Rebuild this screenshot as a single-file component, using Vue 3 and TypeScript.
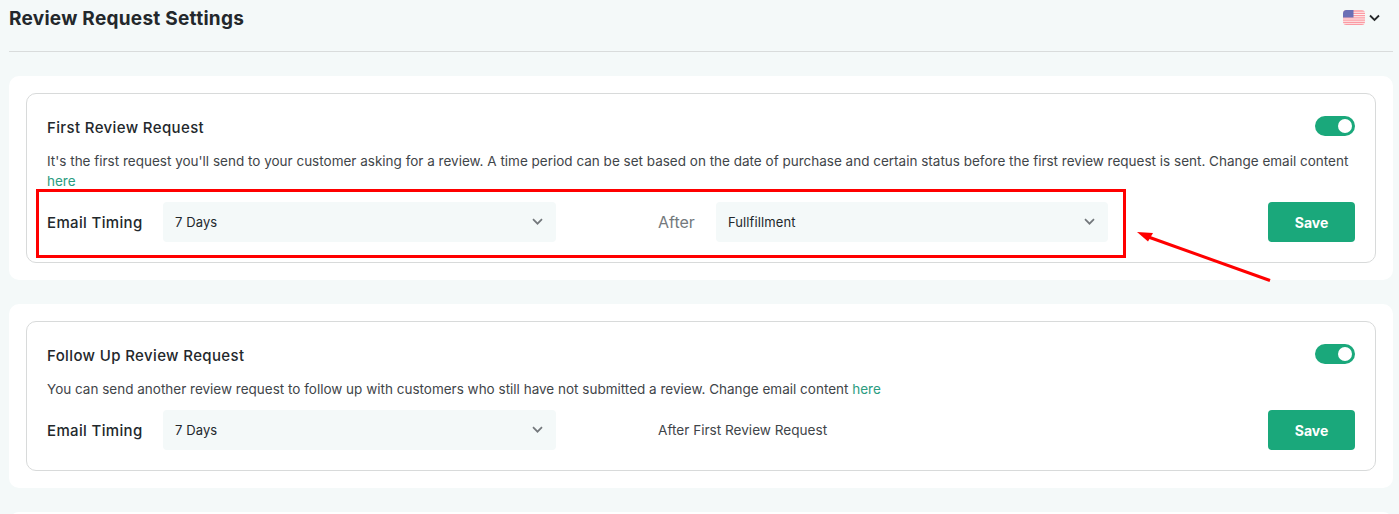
<script setup lang="ts">
interface Req { title: string; before: string; wrap: boolean; after: string; select: boolean }
const reqs: Req[] = [
  { title: 'First Review Request', before: "It's the first request you'll send to your customer asking for a review. A time period can be set based on the date of purchase and certain status before the first review request is sent. Change email content", wrap: true, after: 'After', select: true },
  { title: 'Follow Up Review Request', before: 'You can send another review request to follow up with customers who still have not submitted a review. Change email content', wrap: false, after: 'After First Review Request', select: false },
]
</script>

<template>
  <div class="page">
    <header class="top">
      <h1>Review Request Settings</h1>
      <div class="lang">
        <svg class="flag" width="22" height="15" viewBox="0 0 22 15">
          <defs><clipPath id="fc"><rect width="22" height="15" rx="3.5" /></clipPath></defs>
          <g clip-path="url(#fc)">
            <rect width="22" height="15" fill="#fdf0f1" />
            <path d="M0 1h22M0 3.3h22M0 5.6h22M0 7.9h22M0 10.200h22M0 12.500h22M0 14.600h22" stroke="#fb9aa3" stroke-width="1.300" />
            <rect width="10.500" height="7.500" fill="#6a6fb5" />
          </g>
        </svg>
        <svg width="11" height="8" viewBox="0 0 11 8"><path d="M1 1.500l4.500 4.500L10 1.500" fill="none" stroke="#26292b" stroke-width="1.800" /></svg>
      </div>
    </header>
    <section v-for="r in reqs" :key="r.title" class="card">
      <div class="inner">
        <div class="head">
          <h2>{{ r.title }}</h2>
          <span class="toggle"><i></i></span>
        </div>
        <p class="desc">{{ r.before }} <a>here</a></p>
        <div class="row">
          <label>Email Timing</label>
          <div class="select"><span>7 Days</span>
            <svg width="11" height="8" viewBox="0 0 11 8"><path d="M1 1.200l4.500 4.500L10 1.200" fill="none" stroke="#73787c" stroke-width="1.700" /></svg>
          </div>
          <template v-if="r.select">
            <span class="after big">{{ r.after }}</span>
            <div class="select second"><span>Fullfillment</span>
              <svg width="11" height="8" viewBox="0 0 11 8"><path d="M1 1.200l4.500 4.500L10 1.200" fill="none" stroke="#73787c" stroke-width="1.700" /></svg>
            </div>
          </template>
          <span v-else class="after">{{ r.after }}</span>
          <button class="save">Save</button>
        </div>
      </div>
    </section>
    <div class="peek"></div>
    <div class="redbox"></div>
    <svg class="arrow" width="140" height="60" viewBox="0 0 140 60">
      <path d="M133 50.500L10 6.500" stroke="#ff0000" stroke-width="3" fill="none" />
      <path d="M0 2L16 3L11 11.500Z" fill="#ff0000" />
    </svg>
  </div>
</template>

<style>
html, body { margin: 0; background: #f4f9f9; }
</style>

<style scoped>
.page {
  position: relative;
  width: 1399px;
  height: 514px;
  overflow: hidden;
  box-sizing: border-box;
  padding: 0 6px 0 9px;
  background: #f4f9f9;
  font-family: Inter, "Open Sans", sans-serif;
  color: #23282c;
}
.top {
  display: flex;
  justify-content: space-between;
  align-items: center;
  padding: 0 0 15px 0;
  box-sizing: border-box;
  border-bottom: 1px solid #d9dcdc;
  height: 52px;
  margin-bottom: 24px;
}
h1 { margin: 0; font-size: 19px; font-weight: 700; letter-spacing: 0.27px; }
.lang { display: flex; align-items: center; gap: 4px; margin-right: 13px; margin-top: -1px; }
.flag { display: block; }
.card {
  background: #fff;
  border-radius: 10px;
  padding: 17px;
  margin-bottom: 24px;
}
.inner {
  border: 1px solid #d8dada;
  border-radius: 10px;
  padding: 21px 20px 20px;
}
.head { display: flex; justify-content: space-between; align-items: center; height: 22px; }
h2 { margin: 0; padding-top: 2px; font-size: 15px; font-weight: 500; letter-spacing: 0.37px; }
.toggle {
  width: 40px; height: 20px;
  border-radius: 10px;
  background: #1aa87b;
  display: flex; align-items: center; justify-content: flex-end;
  padding-right: 3px; box-sizing: border-box;
}
.toggle i { width: 14px; height: 14px; border-radius: 50%; background: #fff; }
.desc { margin: 14px 0 0; font-size: 13.5px; line-height: 20px; color: #3f4549; }
.desc a { color: #2b9c80; }
.row { display: flex; align-items: center; margin-top: 11px; height: 40px; }
label { width: 116px; font-size: 15px; font-weight: 500; letter-spacing: 0.35px; }
.select {
  width: 393px; height: 40px;
  box-sizing: border-box;
  background: #f4f9f9;
  border-radius: 4px;
  display: flex; justify-content: space-between; align-items: center;
  padding: 0 13px 0 12px;
  font-size: 13px;
  letter-spacing: 0.1px;
}
.select.second { width: 392px; }
.after { margin-left: 102px; font-size: 13.6px; color: #3f4549; }
.after.big { font-size: 16px; color: #74797d; width: 58px; }
.save {
  margin-left: auto;
  width: 87px; height: 40px;
  border: 0; border-radius: 4px;
  background: #1aa87b;
  color: #fff;
  font: 700 14px Inter, sans-serif;
}
.peek { height: 20px; background: #fff; border-radius: 10px; }
.redbox {
  position: absolute;
  left: 36px; top: 189px;
  width: 1090px; height: 69px;
  box-sizing: border-box;
  border: 3px solid #ff0000;
}
.arrow { position: absolute; left: 1137px; top: 230px; }
</style>
